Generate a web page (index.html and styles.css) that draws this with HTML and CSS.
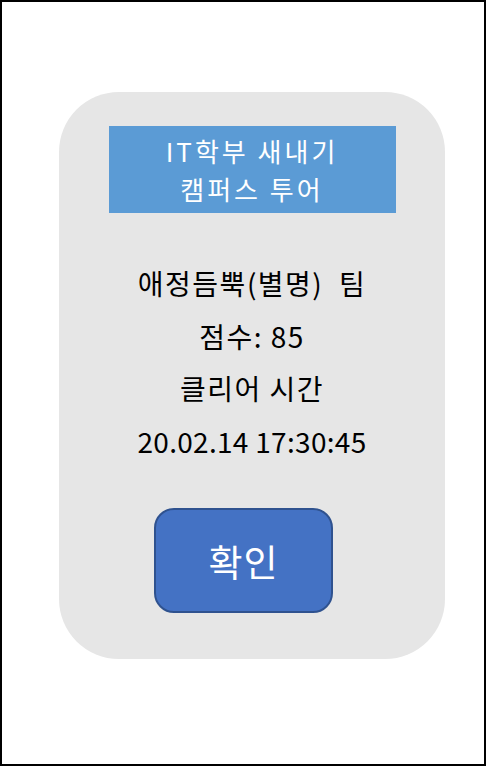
FILE: index.html
```html
<!DOCTYPE html>
<html>
<head>
  <title>캠퍼스 투어 결과</title>
  <link rel="stylesheet" href="styles.css">
</head>
<body>
  <div class="frame">
    <!-- result card -->
    <div class="result-card">
      <div class="title-box">
        <span class="title-line">IT학부 새내기</span>
        <span class="title-line">캠퍼스 투어</span>
      </div>
      <div class="result-lines">
        <p class="result-line">애정듬뿍(별명)&nbsp; 팀</p>
        <p class="result-line">점수: 85</p>
        <p class="result-line">클리어 시간</p>
        <p class="result-line result-time">20.02.14 17:30:45</p>
      </div>
      <button class="ok-button">확인</button>
    </div>
  </div>
</body>
</html>
```

FILE: styles.css
```css
/* Base */
body {
  margin: 0;
  font-family: "Noto Sans CJK KR", "Noto Sans", sans-serif;
  background-color: #ffffff;
  color: #000000;
}

.frame {
  width: 486px;
  height: 766px;
  border: 2px solid #000000;
  box-sizing: border-box;
  padding-top: 90px;
  padding-left: 57px;
}

/* Gray card */
.result-card {
  width: 386px;
  height: 567px;
  background-color: #e6e6e6;
  border-radius: 60px;
  padding-top: 34px;
  box-sizing: border-box;
  display: flex;
  flex-direction: column;
  align-items: center;
}

.title-box {
  width: 287px;
  height: 87px;
  background-color: #5b9bd5;
  color: #ffffff;
  text-align: center;
  display: flex;
  flex-direction: column;
  justify-content: center;
}
.title-line {
  display: block;
  font-size: 26px;
  letter-spacing: 3px;
  line-height: 38px;
}

.result-lines {
  margin-top: 44px;
  text-align: center;
}
.result-line {
  margin: 0;
  font-size: 28px;
  letter-spacing: 1.5px;
  line-height: 52.5px;
}
.result-time {
  letter-spacing: 0.3px;
}

.ok-button {
  margin-top: 41px;
  margin-right: 17px;
  width: 179px;
  height: 105px;
  background-color: #4472c4;
  border: 2px solid #2f528f;
  border-radius: 20px;
  color: #ffffff;
  font-family: inherit;
  font-size: 37px;
  letter-spacing: 1px;
  cursor: pointer;
}
```
